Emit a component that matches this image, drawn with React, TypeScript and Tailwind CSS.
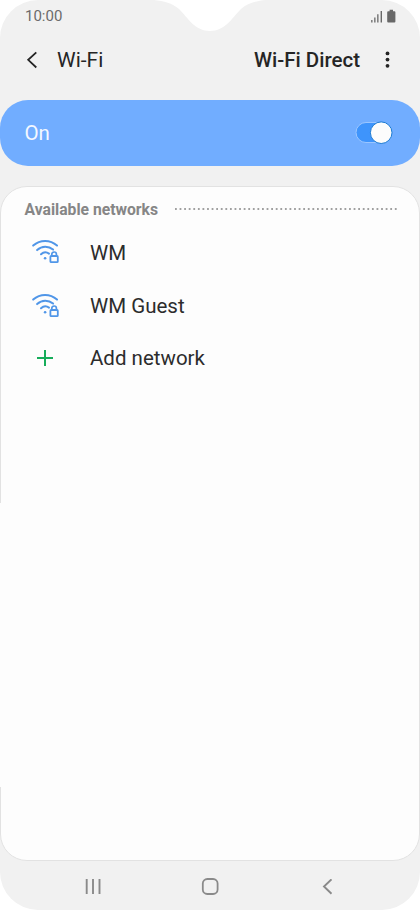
const networks = ['WM', 'WM Guest']

const WifiLockIcon = () => (
  <svg width="28" height="26" viewBox="0 0 28 26" fill="none" stroke="#5096e8" strokeLinecap="round">
    <path d="M1.2 6.6C8.2 .3 18 .3 25 6.6" strokeWidth="2" />
    <path d="M5.1 11.1C10 6.6 16.3 6.6 21.1 10.6" strokeWidth="2" />
    <path d="M9 15.2C11.5 12.9 14.7 12.9 17 14.6" strokeWidth="2" />
    <circle cx="13.1" cy="19.3" r="1.3" fill="#5096e8" stroke="none" />
    <rect x="18.4" y="17" width="7.4" height="6.2" rx=".8" strokeWidth="1.8" />
    <path d="M19.8 17V15.3a2.3 2.3 0 0 1 4.6 0V17" strokeWidth="1.7" />
  </svg>
)

const StatusBar = () => (
  <div className="relative flex h-8 items-center justify-between pl-[25px] pr-6 text-[#6b6b6b]">
    <span className="text-[15px] leading-none">10:00</span>
    {/* camera notch */}
    <svg className="absolute left-[150px] top-0" width="120" height="32" viewBox="0 0 120 32">
      <path d="M4 0C14 1 22 3 29 9C38 18 45 31 60 31C75 31 82 18 91 9C98 3 106 1 116 0Z" fill="#fff" />
    </svg>
    <svg width="26" height="14" viewBox="0 0 26 14" fill="#686868">
      <path d="M1.2 11h1.3v2.4H1.2zM4.2 8.4h1.3v5H4.2zM7.2 5.2h1.3v8.2H7.2zM10.6 2H12v11.4h-1.4z" />
      <path d="M19.6 .8H23v1.5h1.4a1 1 0 0 1 1 1v9.2a1 1 0 0 1-1 1h-6.2a1 1 0 0 1-1-1V3.3a1 1 0 0 1 1-1h1.4z" />
    </svg>
  </div>
)

const Header = () => (
  <header className="flex h-14 items-center pl-[26px] pr-[30px] text-[#252525]">
    <svg width="12" height="18" viewBox="0 0 12 18" fill="none" stroke="currentColor" strokeWidth="1.8">
      <path d="M10.3 1.3L2.2 8.8L10.3 16.5" />
    </svg>
    <h1 className="ml-[19px] text-[21px] leading-6">Wi-Fi</h1>
    <span className="ml-auto text-[20.5px] font-medium leading-6">Wi-Fi Direct</span>
    <svg className="ml-[25px]" width="5" height="18" viewBox="0 0 5 18" fill="currentColor">
      <circle cx="2.5" cy="2.4" r="1.9" />
      <circle cx="2.5" cy="8.6" r="1.9" />
      <circle cx="2.5" cy="14.8" r="1.9" />
    </svg>
  </header>
)

const WifiSwitch = () => (
  <div className="mt-3 flex h-[66px] items-center justify-between rounded-[28px] bg-[#71adff] pl-[24.5px] pr-[27px]">
    <span className="text-[20.5px] leading-6 text-[#f4f8ff]">On</span>
    <svg width="38" height="24" viewBox="0 0 38 24">
      <rect x="1" y="1.5" width="33" height="20" rx="10" fill="#3e94fc" stroke="#9bc6ff" />
      <circle cx="26.2" cy="11.7" r="10.8" fill="#fcfcfc" stroke="#1b7ad2" />
    </svg>
  </div>
)

const NetworkPanel = () => (
  <main className="relative mt-5 h-[675px] rounded-[27px] border border-[#e2e2e2] bg-[#fdfdfd] pl-[23.5px] pr-[21px] pt-3">
    {/* break in the left outline */}
    <div className="absolute -left-px top-[316px] h-[284px] w-px bg-[#fdfdfd]" />
    <div className="flex h-[22px] items-center">
      <h2 className="text-[15.7px] font-bold leading-[22px] text-[#868686]">Available networks</h2>
      <svg className="-mt-0.5 ml-auto" width="223" height="2">
        <path d="M0 1H223" stroke="#a0a0a0" strokeWidth="1.8" strokeDasharray="1.8 2.78" />
      </svg>
    </div>
    <ul className="mt-[5px] text-[20.5px] leading-6 text-[#2c2c2c]">
      {networks.map((name) => (
        <li key={name} className="flex h-[53.5px] items-center">
          <span className="ml-[7.5px] w-[58px] pb-px"><WifiLockIcon /></span>
          <span>{name}</span>
        </li>
      ))}
      <li className="flex h-[50px] items-center">
        <span className="flex w-[65.5px] pl-3">
          <svg width="16" height="16" viewBox="0 0 16 16" stroke="#17ad5b" strokeWidth="2">
            <path d="M0 8H16M8 0V16" />
          </svg>
        </span>
        <span>Add network</span>
      </li>
    </ul>
  </main>
)

const NavBar = () => (
  <nav className="flex h-[49px] items-center justify-between pl-[85px] pr-[87px] pt-[2px] text-[#8a8a8a]">
    <svg width="16" height="16" viewBox="0 0 16 16" stroke="currentColor" strokeWidth="1.9">
      <path d="M1.7 0V15M8 0V15M14.5 0V15" />
    </svg>
    <svg className="-ml-1" width="18" height="18" viewBox="0 0 18 18" fill="none" stroke="currentColor" strokeWidth="1.8">
      <rect x="1.8" y="1" width="14.8" height="15" rx="4.5" />
    </svg>
    <svg width="11" height="16" viewBox="0 0 11 16" fill="none" stroke="currentColor" strokeWidth="1.9">
      <path d="M9.5 .3L2 7.5L9.5 14.7" />
    </svg>
  </nav>
)

export default function App() {
  return (
    <div className="bg-white">
      <div className="h-[910px] w-[420px] overflow-hidden rounded-[38px] bg-[#f1f1f1] font-['Roboto',sans-serif]">
        <StatusBar />
        <Header />
        <WifiSwitch />
        <NetworkPanel />
        <NavBar />
      </div>
    </div>
  )
}
